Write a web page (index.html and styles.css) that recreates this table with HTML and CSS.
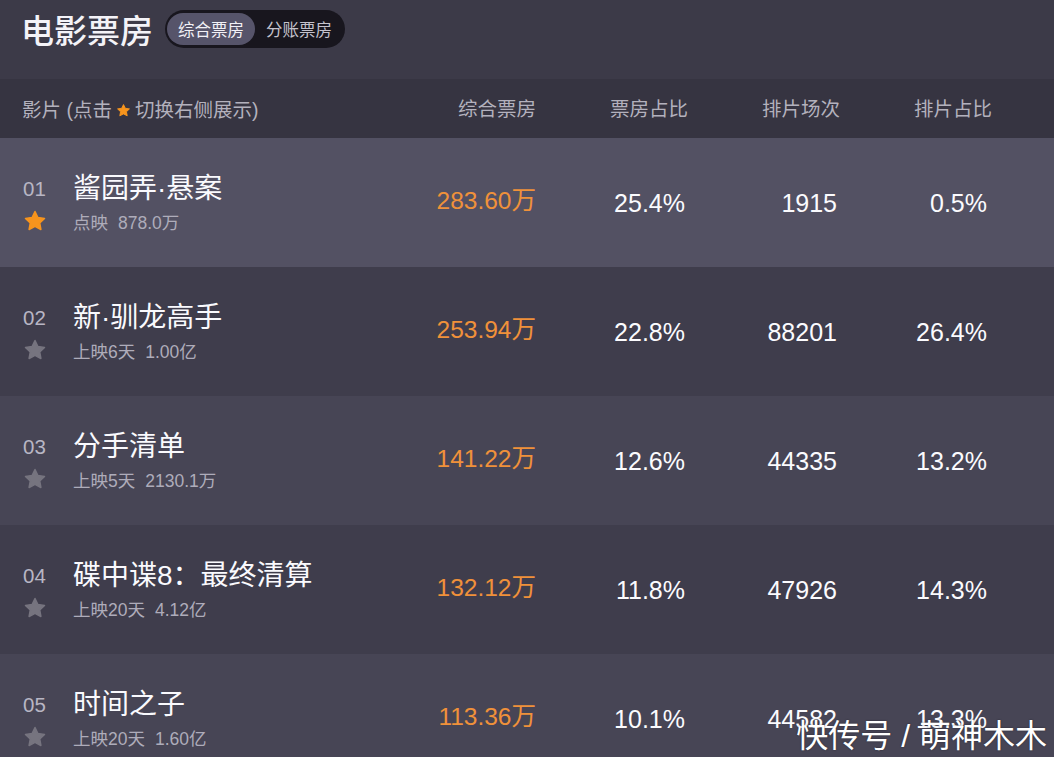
FILE: index.html
```html
<!DOCTYPE html>
<html lang="zh-CN">
<head>
<meta charset="utf-8">
<title>电影票房</title>
<link rel="stylesheet" href="styles.css">
</head>
<body>
<div class="page">
  <header class="topbar">
    <h1 class="title">电影票房</h1>
    <div class="toggle">
      <span class="tab active">综合票房</span>
      <span class="tab">分账票房</span>
    </div>
  </header>

  <div class="thead">
    <div class="film-h">影片 (点击<svg class="star-sm" viewBox="0 0 24 24"><path d="M12 2.5l2.9 6 6.6.9-4.8 4.6 1.2 6.5L12 17.4l-5.9 3.1 1.2-6.5-4.8-4.6 6.6-.9z"/></svg>切换右侧展示)</div>
    <div class="cell">综合票房</div>
    <div class="cell">票房占比</div>
    <div class="cell">排片场次</div>
    <div class="cell">排片占比</div>
  </div>

  <div class="row sel">
    <div class="film">
      <span class="rank">01</span><span class="name">酱园弄·悬案</span>
      <svg class="star on" viewBox="0 0 24 24"><path d="M12 2.5l2.9 6 6.6.9-4.8 4.6 1.2 6.5L12 17.4l-5.9 3.1 1.2-6.5-4.8-4.6 6.6-.9z"/></svg><span class="sub"><span>点映</span><span class="amt">878.0万</span></span>
    </div>
    <div class="cell box">283.60万</div>
    <div class="cell num">25.4%</div>
    <div class="cell num">1915</div>
    <div class="cell num last">0.5%</div>
  </div>

  <div class="row">
    <div class="film">
      <span class="rank">02</span><span class="name">新·驯龙高手</span>
      <svg class="star" viewBox="0 0 24 24"><path d="M12 2.5l2.9 6 6.6.9-4.8 4.6 1.2 6.5L12 17.4l-5.9 3.1 1.2-6.5-4.8-4.6 6.6-.9z"/></svg><span class="sub"><span>上映6天</span><span class="amt">1.00亿</span></span>
    </div>
    <div class="cell box">253.94万</div>
    <div class="cell num">22.8%</div>
    <div class="cell num">88201</div>
    <div class="cell num last">26.4%</div>
  </div>

  <div class="row alt">
    <div class="film">
      <span class="rank">03</span><span class="name">分手清单</span>
      <svg class="star" viewBox="0 0 24 24"><path d="M12 2.5l2.9 6 6.6.9-4.8 4.6 1.2 6.5L12 17.4l-5.9 3.1 1.2-6.5-4.8-4.6 6.6-.9z"/></svg><span class="sub"><span>上映5天</span><span class="amt">2130.1万</span></span>
    </div>
    <div class="cell box">141.22万</div>
    <div class="cell num">12.6%</div>
    <div class="cell num">44335</div>
    <div class="cell num last">13.2%</div>
  </div>

  <div class="row">
    <div class="film">
      <span class="rank">04</span><span class="name">碟中谍8：最终清算</span>
      <svg class="star" viewBox="0 0 24 24"><path d="M12 2.5l2.9 6 6.6.9-4.8 4.6 1.2 6.5L12 17.4l-5.9 3.1 1.2-6.5-4.8-4.6 6.6-.9z"/></svg><span class="sub"><span>上映20天</span><span class="amt">4.12亿</span></span>
    </div>
    <div class="cell box">132.12万</div>
    <div class="cell num">11.8%</div>
    <div class="cell num">47926</div>
    <div class="cell num last">14.3%</div>
  </div>

  <div class="row alt">
    <div class="film">
      <span class="rank">05</span><span class="name">时间之子</span>
      <svg class="star" viewBox="0 0 24 24"><path d="M12 2.5l2.9 6 6.6.9-4.8 4.6 1.2 6.5L12 17.4l-5.9 3.1 1.2-6.5-4.8-4.6 6.6-.9z"/></svg><span class="sub"><span>上映20天</span><span class="amt">1.60亿</span></span>
    </div>
    <div class="cell box">113.36万</div>
    <div class="cell num">10.1%</div>
    <div class="cell num">44582</div>
    <div class="cell num last">13.3%</div>
  </div>
</div>
<div class="mark">快传号 / 萌神木木</div>
</body>
</html>
```

FILE: styles.css
```css
html, body {
  margin: 0;
  padding: 0;
  height: 757px;
  overflow: hidden;
}
body {
  background: #3f3d4c;
  font-family: "Liberation Sans", "Noto Sans CJK SC", sans-serif;
  color: #fff;
  position: relative;
}
.page {
  width: 1054px;
}
.topbar {
  height: 79px;
  box-sizing: border-box;
  background: #3c3a48;
  display: flex;
  align-items: flex-start;
  padding: 10px 0 0 21px;
  gap: 12px;
}
.title {
  margin: 0;
  font-size: 33px;
  font-weight: 500;
  line-height: 38px;
  color: #f4f3f8;
  font-family: "Noto Sans CJK SC", sans-serif;
}
.toggle {
  display: flex;
  height: 38px;
  box-sizing: border-box;
  padding: 3px 2px;
  background: #18161e;
  border-radius: 19px;
}
.tab {
  display: flex;
  align-items: center;
  padding: 0 11px;
  font-size: 16.5px;
  color: #c4c2cc;
  border-radius: 17px;
  font-family: "Noto Sans CJK SC", sans-serif;
}
.tab.active {
  background: #56546a;
  color: #f2f1f6;
}
.thead {
  height: 59px;
  background: #363441;
  display: flex;
  align-items: center;
  padding-right: 62px;
  color: #b3b1bd;
  font-size: 19.5px;
}
.film-h {
  flex: 1;
  padding-left: 22px;
  display: flex;
  align-items: center;
  white-space: pre;
}
.star-sm {
  width: 15px;
  height: 15px;
  margin: 3px 4px 0 4px;
  fill: #f7941d;
  stroke: #f7941d;
  stroke-width: 1.5;
  stroke-linejoin: round;
}
.cell {
  width: 152px;
  text-align: right;
  line-height: 30px;
}
.row {
  height: 129px;
  display: flex;
  align-items: center;
  padding-right: 62px;
  background: #3f3d4c;
}
.row.alt { background: #474555; }
.row.sel { background: #535163; }
.film {
  flex: 1;
  align-self: flex-start;
  padding: 35px 0 0 23px;
  display: grid;
  grid-template-columns: 50px auto;
  grid-auto-rows: 32px;
  align-items: center;
}
.rank {
  font-size: 20.5px;
  color: #b8b6c4;
}
.name {
  font-size: 28px;
  line-height: 32px;
  color: #fafafe;
  white-space: nowrap;
}
.star {
  width: 24px;
  height: 24px;
  fill: #76747f;
  stroke: #76747f;
  stroke-width: 1.5;
  stroke-linejoin: round;
}
.star.on {
  fill: #f7941d;
  stroke: #f7941d;
}
.sub {
  font-size: 17.5px;
  color: #aeacba;
  display: flex;
  gap: 10px;
}
.box {
  font-size: 24.5px;
  color: #f0913a;
  margin-top: -4px;
}
.num {
  font-size: 25px;
  color: #fbfbfe;
  padding-right: 3px;
  box-sizing: border-box;
}
.num.last {
  padding-right: 5px;
}
.mark {
  position: absolute;
  top: 720px;
  right: 7px;
  font-size: 32px;
  line-height: 32px;
  color: #ffffff;
  white-space: pre;
  text-shadow: 0 0 2px rgba(0, 0, 0, 0.45);
}
```
